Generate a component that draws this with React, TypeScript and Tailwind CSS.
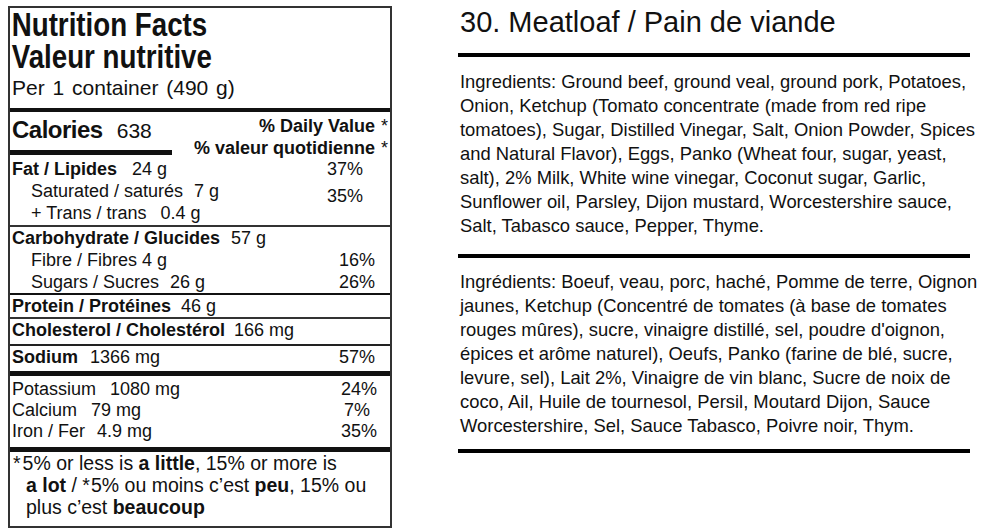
import React from "react";

type Nutrient = {
  label: string;
  value: string;
  gap: string;
  bold?: boolean;
  indent?: boolean;
};

function Line({ item }: { item: Nutrient }) {
  return (
    <div className={`flex items-baseline whitespace-nowrap ${item.indent ? "pl-[21px]" : "pl-[2px]"}`}>
      <span className={item.bold ? "font-bold" : ""}>{item.label}</span>
      <span className={item.gap}>{item.value}</span>
    </div>
  );
}

function NutritionLabel() {
  return (
    <div className="w-[384px] h-[522px] border-2 border-[#333] text-[18px] text-[#111] font-['Liberation_Sans',Arial,sans-serif]">
      {/* heading, condensed like the printed label */}
      <div className="pl-[2px] pt-[1px] font-bold text-[33px] leading-[32px] whitespace-nowrap origin-left scale-x-[0.84]">
        <div>Nutrition Facts</div>
        <div>Valeur nutritive</div>
      </div>
      <div className="pl-[2px] pb-[5px] text-[21px] leading-[30px] [word-spacing:2px]">Per 1 container (490 g)</div>
      <div className="h-1 bg-[#111]" />

      {/* calories */}
      <div className="flex h-[46px] items-start">
        <div className="w-[162px]">
          <div className="pl-[2px] pt-[2px] leading-[32px] whitespace-nowrap">
            <span className="text-[24px] font-bold tracking-[-0.5px]">Calories</span>
            <span className="ml-[14px] text-[21px]">638</span>
          </div>
          <div className="mt-[2px] h-[5px] bg-[#111]" />
        </div>
        <div className="flex-1 pt-[3px] pr-[2px] text-right font-bold leading-[22px] whitespace-nowrap">
          <div>
            % Daily Value<span className="ml-[6px] font-normal">*</span>
          </div>
          <div>
            % valeur quotidienne<span className="ml-[6px] font-normal">*</span>
          </div>
        </div>
      </div>

      {/* fat */}
      <div className="flex leading-[22px]">
        <div className="flex-1">
          <Line item={{ label: "Fat / Lipides", value: "24 g", gap: "ml-[15px]", bold: true }} />
          <Line item={{ label: "Saturated / saturés", value: "7 g", gap: "ml-[11px]", indent: true }} />
          <Line item={{ label: "+ Trans / trans", value: "0.4 g", gap: "ml-[14px]", indent: true }} />
        </div>
        <div className="pr-[27px] text-right">
          <div>37%</div>
          <div className="mt-[5px]">35%</div>
        </div>
      </div>
      <div className="mt-[1px] h-[2px] bg-[#333]" />

      {/* carbohydrate */}
      <div className="leading-[22px]">
        <Line item={{ label: "Carbohydrate / Glucides", value: "57 g", gap: "ml-[11px]", bold: true }} />
        <div className="flex justify-between pr-[15px]">
          <Line item={{ label: "Fibre / Fibres", value: "4 g", gap: "ml-[5px]", indent: true }} />
          <span>16%</span>
        </div>
        <div className="flex justify-between pr-[15px]">
          <Line item={{ label: "Sugars / Sucres", value: "26 g", gap: "ml-[11px]", indent: true }} />
          <span>26%</span>
        </div>
      </div>
      <div className="h-[2px] bg-[#111]" />

      <div className="leading-[22px]">
        <Line item={{ label: "Protein / Protéines", value: "46 g", gap: "ml-[10px]", bold: true }} />
      </div>
      <div className="h-[2px] bg-[#333]" />

      <div className="leading-[22px]">
        <Line item={{ label: "Cholesterol / Cholestérol", value: "166 mg", gap: "ml-[9px]", bold: true }} />
      </div>
      <div className="mt-[3px] h-[2px] bg-[#222]" />

      <div className="flex justify-between pr-[15px] leading-[22px]">
        <Line item={{ label: "Sodium", value: "1366 mg", gap: "ml-[12px]", bold: true }} />
        <span>57%</span>
      </div>
      <div className="mt-[3px] h-[5px] bg-[#111]" />

      {/* minerals */}
      <div className="pt-[2px]">
        <div className="flex justify-between pr-[13px] leading-[22px]">
          <Line item={{ label: "Potassium", value: "1080 mg", gap: "ml-[14px]" }} />
          <span>24%</span>
        </div>
        <div className="flex justify-between pr-[20px] leading-[21px]">
          <Line item={{ label: "Calcium", value: "79 mg", gap: "ml-[14px]" }} />
          <span>7%</span>
        </div>
        <div className="flex justify-between pr-[13px] leading-[21px]">
          <Line item={{ label: "Iron / Fer", value: "4.9 mg", gap: "ml-[12px]" }} />
          <span>35%</span>
        </div>
      </div>
      <div className="mt-[5px] h-[5px] bg-[#111]" />

      {/* footnote */}
      <div className="pl-[3px] text-[19.5px] leading-[22px] whitespace-nowrap">
        <div>
          <span className="mr-[2px]">*</span>5% or less is <b>a little</b>, 15% or more is
        </div>
        <div className="pl-[13px]">
          <b>a lot</b> / <span className="mr-[1px]">*</span>5% ou moins c’est <b>peu</b>, 15% ou
        </div>
        <div className="pl-[13px]">
          plus c’est <b>beaucoup</b>
        </div>
      </div>
    </div>
  );
}

const english = [
  "Ingredients: Ground beef, ground veal, ground pork, Potatoes,",
  "Onion, Ketchup (Tomato concentrate (made from red ripe",
  "tomatoes), Sugar, Distilled Vinegar, Salt, Onion Powder, Spices",
  "and Natural Flavor), Eggs, Panko (Wheat four, sugar, yeast,",
  "salt), 2% Milk, White wine vinegar, Coconut sugar, Garlic,",
  "Sunflower oil, Parsley, Dijon mustard, Worcestershire sauce,",
  "Salt, Tabasco sauce, Pepper, Thyme.",
];

const french = [
  "Ingrédients: Boeuf, veau, porc, haché, Pomme de terre, Oignon",
  "jaunes, Ketchup (Concentré de tomates (à base de tomates",
  "rouges mûres), sucre, vinaigre distillé, sel, poudre d'oignon,",
  "épices et arôme naturel), Oeufs, Panko (farine de blé, sucre,",
  "levure, sel), Lait 2%, Vinaigre de vin blanc, Sucre de noix de",
  "coco, Ail, Huile de tournesol, Persil, Moutard Dijon, Sauce",
  "Worcestershire, Sel, Sauce Tabasco, Poivre noir, Thym.",
];

export default function App() {
  return (
    <div className="w-[997px] h-[531px] bg-white flex items-start font-['Liberation_Sans',Arial,sans-serif] text-[#111]">
      <div className="ml-[8px] mt-[6px]">
        <NutritionLabel />
      </div>

      <div className="ml-[66px] w-[512px]">
        <h1 className="mt-[4px] pl-[2px] text-[29px] leading-[36px] whitespace-nowrap">30. Meatloaf / Pain de viande</h1>
        <div className="mt-[13px] h-1 bg-black" />

        <div className="pt-[13px] pl-[2px] text-[18.4px] leading-[24px] whitespace-nowrap">
          {english.map((line) => (
            <div key={line}>{line}</div>
          ))}
        </div>
        <div className="mt-[16px] h-1 bg-black" />

        <div className="pt-[12px] pl-[2px] text-[18.4px] leading-[24px] whitespace-nowrap">
          {french.map((line) => (
            <div key={line}>{line}</div>
          ))}
        </div>
        <div className="mt-[11px] h-1 bg-black" />
      </div>
    </div>
  );
}
